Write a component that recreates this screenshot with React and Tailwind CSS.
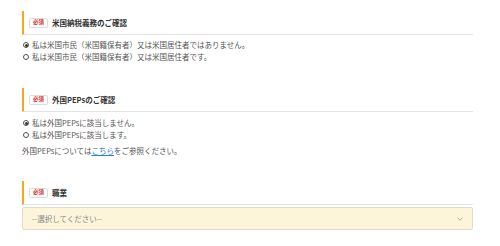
import React from "react";

const font = { fontFamily: '"Noto Sans CJK JP", "Noto Sans", sans-serif' };

function Heading({ children }) {
  return (
    <div className="flex h-[24px] items-center border-l-2 border-b border-l-[#f4a81d] border-b-[#e3e3e3] pl-[5px]">
      <span className="flex h-[10px] w-[19px] items-center justify-center rounded-[2px] border border-[#dcdcdc] bg-white text-[5.5px] font-bold leading-none text-[#d22d2d]">
        必須
      </span>
      <span className="ml-[4px] text-[7.5px] font-bold leading-none text-[#333]">{children}</span>
    </div>
  );
}

function Radio({ checked, children }) {
  return (
    <div className="flex h-[12px] items-center text-[7.5px] leading-none text-[#555]">
      <span className="ml-[1px] flex h-[6px] w-[6px] items-center justify-center rounded-full border border-[#555]">
        {checked && <span className="h-[3px] w-[3px] rounded-full bg-[#333]" />}
      </span>
      <span className="ml-[3px]">{children}</span>
    </div>
  );
}

export default function App() {
  return (
    <div className="h-[246px] w-[500px] bg-white" style={font}>
      <div className="ml-[22px] w-[451px] pt-[11px]">
        <Heading>米国納税義務のご確認</Heading>
        <div className="mt-[4px]">
          <Radio checked>私は米国市民（米国籍保有者）又は米国居住者ではありません。</Radio>
          <Radio>私は米国市民（米国籍保有者）又は米国居住者です。</Radio>
        </div>

        <div className="mt-[25px]">
          <Heading>外国PEPsのご確認</Heading>
        </div>
        <div className="mt-[5px]">
          <Radio checked>私は外国PEPsに該当しません。</Radio>
          <Radio>私は外国PEPsに該当します。</Radio>
        </div>
        <p className="mt-[4px] h-[12px] text-[7.5px] leading-[12px] text-[#555]">
          外国PEPsについては
          <a className="text-[#2f80d1] underline">こちら</a>
          をご参照ください。
        </p>

        <div className="mt-[24px]">
          <Heading>職業</Heading>
        </div>
        <div className="mt-[2px] flex h-[23px] items-center justify-between rounded-[2px] border border-[#dedbcf] bg-[#fcf5da] pl-[9px] pr-[9px]">
          <span className="text-[7.5px] leading-none text-[#888]">--選択してください--</span>
          <svg width="6" height="4" viewBox="0 0 6 4" fill="none">
            <path d="M0.5 0.8 L3 3.2 L5.5 0.8" stroke="#999" strokeWidth="0.8" />
          </svg>
        </div>
      </div>
    </div>
  );
}
